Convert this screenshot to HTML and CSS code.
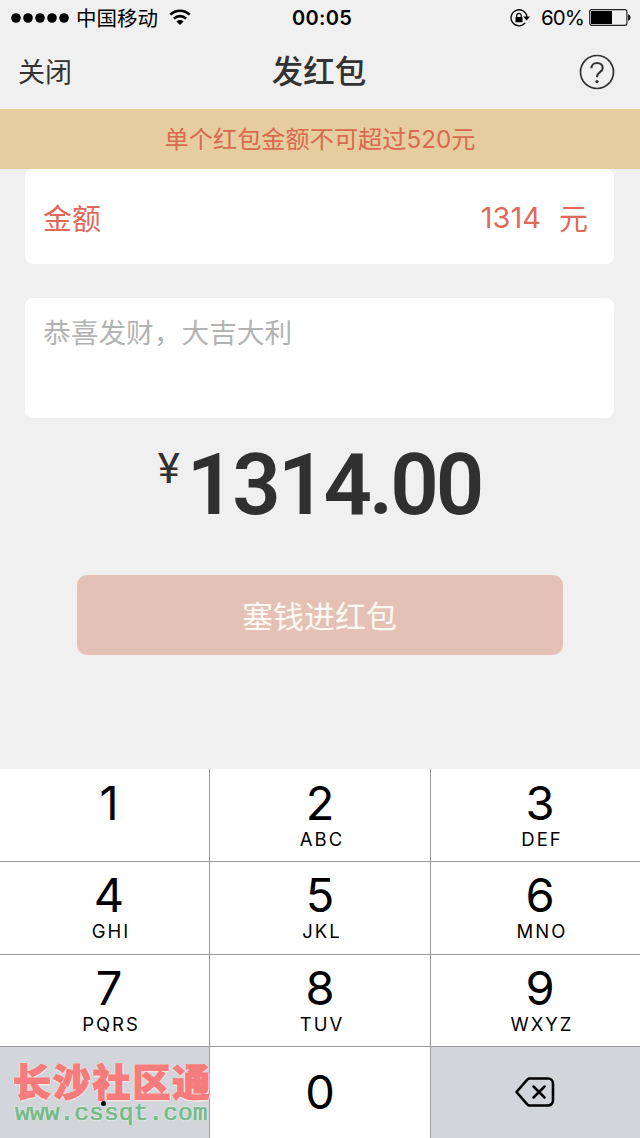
FILE: index.html
```html
<!DOCTYPE html>
<html lang="zh-CN">
<head>
  <meta charset="UTF-8">
  <title>发红包</title>
  <meta name="viewport" content="width=device-width, initial-scale=1.0">
  <link rel="stylesheet" href="styles.css">
</head>
<body>
  <div class="status-bar">
    <div class="status-left">
      <svg class="signal" width="58" height="10" viewBox="0 0 58 10">
        <circle cx="5" cy="5" r="4.8"/>
        <circle cx="17" cy="5" r="4.8"/>
        <circle cx="29" cy="5" r="4.8"/>
        <circle cx="41" cy="5" r="4.8"/>
        <circle cx="53" cy="5" r="4.8"/>
      </svg>
      <span class="carrier">中国移动</span>
      <svg class="wifi" width="22" height="17" viewBox="0 0 22 17" fill="none" stroke="#000" stroke-width="2.6">
        <path d="M1.3 5.6a14 14 0 0 1 19.4 0"/>
        <path d="M4.9 9.6a8.8 8.8 0 0 1 12.2 0"/>
        <path d="M11 16 7.4 12.4a5.2 5.2 0 0 1 7.2 0z" fill="#000" stroke="none"/>
      </svg>
    </div>
    <span class="clock">00:05</span>
    <div class="status-right">
      <svg width="21" height="18" viewBox="0 0 21 18">
        <path d="M15.2 13.9A8 8 0 1 1 17 8" fill="none" stroke="#000" stroke-width="1.3"/>
        <path d="M13.2 7.5h6.8l-3.4 4z"/>
        <rect x="5.5" y="8" width="7" height="5.2" rx=".5"/>
        <path d="M6.8 8.3V6.5a2.2 2.2 0 0 1 4.4 0v1.8" fill="none" stroke="#000" stroke-width="1.2"/>
      </svg>
      <span class="percent">60%</span>
      <svg width="42" height="17" viewBox="0 0 42 17">
        <rect x=".7" y=".7" width="37.2" height="15.6" rx="2" fill="none" stroke="#222" stroke-width="1.2"/>
        <rect x="2" y="2" width="21" height="13"/>
        <path d="M39.2 5.3c3 .8 3 5.6 0 6.4z"/>
      </svg>
    </div>
  </div>

  <div class="nav">
    <span class="close">关闭</span>
    <h1>发红包</h1>
    <svg class="help" width="36" height="36" viewBox="0 0 36 36" fill="none" stroke="#333">
      <circle cx="18" cy="18" r="16.5" stroke-width="1.7"/>
      <path d="M12.4 14.3c0-3.3 2.4-5.3 5.6-5.3 3.3 0 5.7 1.9 5.7 4.9 0 4.3-5.6 4.3-5.6 8.7v.7" stroke-width="2.1"/>
      <circle cx="18" cy="27.6" r="1.7" fill="#333" stroke="none"/>
    </svg>
  </div>

  <div class="banner">单个红包金额不可超过520元</div>

  <div class="form">
    <div class="card amount">
      <span>金额</span>
      <span class="value">1314</span>
      <span>元</span>
    </div>
    <div class="card message">恭喜发财，大吉大利</div>
    <div class="total"><span class="yen">¥</span><span class="sum">1314.00</span></div>
    <button class="submit">塞钱进红包</button>
  </div>

  <div class="keypad">
    <div class="key"><b>1</b></div>
    <div class="key"><b>2</b><i>ABC</i></div>
    <div class="key"><b>3</b><i>DEF</i></div>
    <div class="key"><b>4</b><i>GHI</i></div>
    <div class="key"><b>5</b><i>JKL</i></div>
    <div class="key"><b>6</b><i>MNO</i></div>
    <div class="key"><b>7</b><i>PQRS</i></div>
    <div class="key"><b>8</b><i>TUV</i></div>
    <div class="key"><b>9</b><i>WXYZ</i></div>
    <div class="key gray">
      <span class="dot"></span>
      <div class="watermark">
        <div class="wm-name">长沙社区通</div>
        <div class="wm-url">www.cssqt.com</div>
      </div>
    </div>
    <div class="key zero"><b>0</b></div>
    <div class="key gray">
      <svg class="backspace" width="40" height="30" viewBox="0 0 40 30" fill="none" stroke="#000" stroke-linejoin="round" stroke-linecap="round">
        <path d="M14.5 1.5H33a5 5 0 0 1 5 5v17a5 5 0 0 1-5 5H14.5a3 3 0 0 1-2-.9L1.5 15 12.5 2.4a3 3 0 0 1 2-.9z" stroke-width="2.6"/>
        <path d="M18.5 9.5l11 11M29.5 9.5l-11 11" stroke-width="2.5"/>
      </svg>
    </div>
  </div>
</body>
</html>
```

FILE: styles.css
```css
* {
  box-sizing: border-box;
}
body {
  margin: 0;
  width: 640px;
  height: 1138px;
  overflow: hidden;
  display: flex;
  flex-direction: column;
  background: #f0f0f0;
  font-family: Inter, "Noto Sans CJK SC", sans-serif;
  color: #000;
}
svg {
  display: block;
  flex: none;
}
.status-bar {
  display: grid;
  grid-template-columns: 1fr auto 1fr;
  align-items: center;
  height: 35px;
  padding: 0 9px 0 11px;
  font-size: 20px;
}
.status-left,
.status-right {
  display: flex;
  align-items: center;
}
.status-right {
  justify-content: flex-end;
}
.carrier {
  margin: 0 11px 0 7px;
  padding-top: 2px;
  font-size: 20.5px;
  line-height: 30px;
}
.clock {
  padding-left: 2px;
  font-size: 20px;
  font-weight: 600;
  letter-spacing: 0.3px;
}
.percent {
  margin: 0 5px 0 10px;
  font-size: 20.5px;
  letter-spacing: -0.9px;
}
.nav {
  display: grid;
  grid-template-columns: 1fr auto 1fr;
  align-items: center;
  height: 74px;
  padding: 0 25px 0 18px;
  color: #333;
}
.close {
  padding-top: 2px;
  font-size: 27px;
  line-height: 40px;
}
.nav h1 {
  margin: 0;
  padding-left: 5px;
  font-size: 31.5px;
  line-height: 44px;
  font-weight: 500;
}
.help {
  justify-self: end;
}
.banner {
  height: 60px;
  background: #e5cd9e;
  color: #d9694f;
  font-size: 24.2px;
  line-height: 61px;
  text-align: center;
}
.form {
  display: flex;
  flex-direction: column;
  height: 600px;
  padding: 0 26px 0 25px;
}
.card {
  background: #fff;
  border-radius: 8px;
  padding: 0 18px;
}
.amount {
  display: flex;
  align-items: center;
  height: 95px;
  padding-right: 26px;
  color: #e0695a;
  font-size: 29px;
}
.value {
  margin-left: auto;
  margin-right: 18px;
  padding-top: 2px;
}
.message {
  height: 120px;
  margin-top: 34px;
  padding-top: 15px;
  color: #b3b3b3;
  font-size: 27.7px;
  line-height: 40px;
}
.total {
  display: flex;
  justify-content: center;
  height: 157px;
  padding-top: 34px;
  color: #303030;
  font-family: Roboto, sans-serif;
}
.yen {
  margin-right: 7px;
  font-size: 42px;
  line-height: 34px;
}
.sum {
  font-size: 85px;
  line-height: 66px;
  font-weight: 600;
  letter-spacing: -3px;
}
.submit {
  align-self: center;
  width: 486px;
  height: 80px;
  padding: 0 0 2px;
  border: none;
  border-radius: 10px;
  background: #e3c1b7;
  color: #fff8f0;
  font-family: inherit;
  font-size: 31px;
}
.keypad {
  display: grid;
  grid-template-columns: 210px 221px 209px;
  grid-template-rows: 93px 93px 92px 91px;
  height: 369px;
  background: #fff;
}
.key {
  position: relative;
  display: flex;
  flex-direction: column;
  align-items: center;
  padding-top: 8px;
  border-right: 1px solid #9b9b9b;
  border-bottom: 1px solid #9b9b9b;
}
.key:nth-child(-n+3) {
  padding-top: 9px;
}
.key:nth-child(3n) {
  border-right: none;
}
.key:nth-child(3n+1) {
  padding-left: 9px;
}
.key:nth-child(3n+3) {
  padding-left: 9px;
}
.key:nth-child(n+10) {
  border-bottom: none;
}
.key b {
  font-size: 47px;
  line-height: 49px;
  font-weight: 400;
}
.key i {
  margin-left: 4px;
  padding-top: 2px;
  font-size: 18.5px;
  line-height: 21px;
  font-style: normal;
  letter-spacing: 2px;
}
.key.zero {
  padding-top: 20px;
}
.key.gray {
  padding-left: 0;
  background: #d2d5da;
}
/* decimal point stays visible over the watermark */
.dot {
  z-index: 1;
  width: 5px;
  height: 5px;
  margin: 46px 3px 0 0;
  border-radius: 50%;
  background: #000;
}
.backspace {
  margin: 22px 1px 0 0;
}
.watermark {
  position: absolute;
  left: 13px;
  top: 16px;
  white-space: nowrap;
}
.wm-name {
  color: #f47c7c;
  font-size: 38px;
  line-height: 38px;
  font-weight: 900;
  letter-spacing: 1.8px;
  -webkit-text-stroke: 1.2px #f47c7c;
  text-shadow: 1.5px 0 #f9e3e5, -1.5px 0 #f9e3e5, 0 1.5px #f9e3e5, 0 -1.5px #f9e3e5;
}
.wm-url {
  margin: -1px 0 0 2px;
  color: #78b88a;
  font-family: "Liberation Mono", monospace;
  font-size: 24.7px;
  line-height: 26px;
  -webkit-text-stroke: 0.7px #78b88a;
  text-shadow: 1px 0 #e8f0ec, -1px 0 #e8f0ec, 0 1px #e8f0ec, 0 -1px #e8f0ec;
}
```
